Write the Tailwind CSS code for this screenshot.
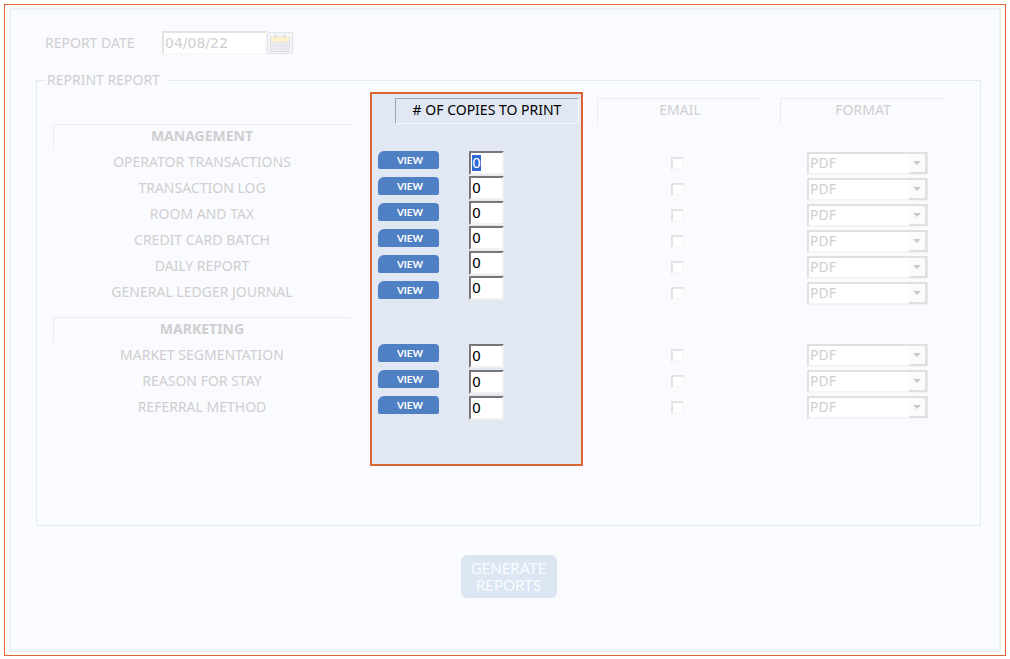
<!DOCTYPE html>
<html lang="en">
<head>
  <meta charset="UTF-8" />
  <meta name="viewport" content="width=device-width, initial-scale=1.0" />
  <title>Reprint Report</title>
  <script src="https://cdn.jsdelivr.net/npm/@tailwindcss/browser@4"></script>
</head>
<body class="min-h-screen flex flex-col bg-white px-1 pt-1 pb-[3px] font-['Noto_Sans',sans-serif] text-sm leading-4 text-[#cfcfd0]">
  <main class="grow flex flex-col border border-[#dc6433] px-1 py-[3px]">
    <form class="grow border-2 border-[#ebf0f8] bg-[#fafbfe] pl-[25px] pr-[18px] pt-[21px]">
      <div class="flex items-center pl-[9px]">
        <label for="reportDate" class="w-[117px]">REPORT DATE</label>
        <input id="reportDate" type="text" value="04/08/22" class="h-6 w-[105px] border-2 border-t-[#e2e2e2] border-l-[#e2e2e2] border-r-[#f8f8f9] border-b-[#f8f8f9] bg-white pl-px font-['DejaVu_Sans',sans-serif] outline-none" />
        <button type="button" aria-label="Pick date" class="flex h-[22px] w-[26px] items-center justify-center rounded-xs border border-[#dfe1e8] bg-[#f5f6f8]">
          <svg width="20" height="18" viewBox="0 0 20 18" fill="none">
            <rect x="0.5" y="2.5" width="19" height="15" rx="1.5" fill="#eceef1" stroke="#dcdee3" />
            <path d="M1 2.5h18v5.5H1z" fill="#fbf1cf" />
            <path d="M5.5 0v4M14.5 0v4" stroke="#d9dbe0" stroke-width="1.5" />
            <path d="M2 8.5h16M2 11.5h16M2 14.5h16M4.5 9v7M7.5 9v7M10.5 9v7M13.5 9v7M16.5 9v7" stroke="#e2e4e8" />
          </svg>
        </button>
      </div>

      <fieldset class="mt-[17px] border border-[#e3eaf6] pt-1 pb-[59px]">
        <legend class="ml-2 pr-2 pl-[2px]">REPRINT REPORT</legend>
        <div class="grid grid-cols-[333fr_213fr_189fr_208fr]">
          <!-- report names -->
          <div class="pt-8 pl-4 pr-[19px] text-center">
            <h2 class="h-[25px] border border-t-[#ececed] border-l-[#ececed] border-r-[#fefefe] border-b-[#fefefe] pt-[3px] font-bold">MANAGEMENT</h2>
            <div data-list="name" data-group="management"></div>
            <h2 class="mt-3 h-[25px] border border-t-[#ececed] border-l-[#ececed] border-r-[#fefefe] border-b-[#fefefe] pt-[3px] font-bold">MARKETING</h2>
            <div data-list="name" data-group="marketing"></div>
          </div>

          <!-- copies, highlighted -->
          <div class="h-[374px] border-2 border-[#dc6433] bg-[#e2e8f3] pt-1 pl-[6px] pr-[2px] text-black">
            <h2 class="ml-[17px] h-[26px] border border-t-[#a3a7ae] border-l-[#a3a7ae] border-r-[#f5f7fb] border-b-[#f5f7fb] pt-[3px] text-center">
              # OF COPIES TO PRINT
            </h2>
            <div class="mt-[27px] flex gap-[30px]">
              <div data-list="view" data-group="management" class="flex flex-col gap-2"></div>
              <div data-list="copies" data-group="management" class="flex flex-col gap-px"></div>
            </div>
            <div class="mt-11 flex gap-[30px]">
              <div data-list="view" data-group="marketing" class="flex flex-col gap-2"></div>
              <div data-list="copies" data-group="marketing" class="flex flex-col gap-[2px]"></div>
            </div>
          </div>

          <div class="pt-[6px] pl-[14px] pr-[9px]">
            <h2 class="h-[26px] border border-t-[#ececed] border-l-[#ececed] border-r-[#fefefe] border-b-[#fefefe] pt-[3px] text-center">EMAIL</h2>
            <div data-list="email" data-group="management" class="mt-[26px] pr-[6px]"></div>
            <div data-list="email" data-group="marketing" class="mt-9 pr-[6px]"></div>
          </div>

          <div class="pt-[6px] pl-2 pr-[34px]">
            <h2 class="h-[26px] border border-t-[#ececed] border-l-[#ececed] border-r-[#fefefe] border-b-[#fefefe] pt-[3px] text-center">FORMAT</h2>
            <div data-list="format" data-group="management" class="mt-[26px] pl-[27px]"></div>
            <div data-list="format" data-group="marketing" class="mt-9 pl-[27px]"></div>
          </div>
        </div>
      </fieldset>

      <button type="button" class="mt-[29px] mx-auto block h-[43px] w-24 rounded-md bg-[#dce6f2] font-['Lato',sans-serif] text-[15px] leading-[17px] text-[#fafbfe]">GENERATE REPORTS</button>
    </form>
  </main>

  <script>
    const reports = {
      management: ["OPERATOR TRANSACTIONS", "TRANSACTION LOG", "ROOM AND TAX", "CREDIT CARD BATCH", "DAILY REPORT", "GENERAL LEDGER JOURNAL"],
      marketing: ["MARKET SEGMENTATION", "REASON FOR STAY", "REFERRAL METHOD"],
    };

    const templates = {
      name: (name, id) => `
        <label for="copies-${id}" class="block h-[26px] leading-[26px]">${name}</label>`,
      view: name => `
        <button type="button" aria-label="View ${name}" class="h-[18px] w-[61px] rounded-tl-md rounded-tr-[4px] rounded-b-xs bg-[#5080c4] pl-[3px] font-['Lato',sans-serif] text-[10px] leading-[18px] font-bold text-white">VIEW</button>`,
      copies: (name, id) => `
        <input id="copies-${id}" type="text" value="0" class="h-6 w-[35px] border-2 border-t-[#777777] border-l-[#777777] border-r-[#f1f1f1] border-b-[#f1f1f1] bg-white pb-px pl-px font-['DejaVu_Sans',sans-serif] text-black outline-none selection:bg-[#2f6bd6] selection:text-white" />`,
      email: name => `
        <div class="flex h-[26px] items-center justify-center">
          <input type="checkbox" aria-label="Email ${name}" class="size-[13px] appearance-none border-2 border-t-[#e3e3e3] border-l-[#e3e3e3] border-r-[#f8f8f8] border-b-[#f8f8f8] bg-white" />
        </div>`,
      format: name => `
        <div class="flex h-[26px] items-center">
          <div class="relative w-[121px]">
            <select aria-label="Format of ${name}" class="block h-[23px] w-full appearance-none border-2 border-t-[#e0e0e0] border-l-[#e0e0e0] border-r-[#e8e8e8] border-b-[#f4f4f4] bg-white pl-px outline-none"><option>PDF</option></select>
            <span class="pointer-events-none absolute top-[2px] right-px flex h-5 w-[18px] items-center justify-center border-r-2 border-b-2 border-[#e0e0e0] bg-[#fbfbfc]">
              <svg width="8" height="4" viewBox="0 0 8 4"><path d="M0 0h8L4 4z" fill="#c9c9c9" /></svg>
            </span>
          </div>
        </div>`,
    };

    document.querySelectorAll("[data-list]").forEach(el => {
      const { list, group } = el.dataset;
      el.innerHTML = reports[group].map((name, i) => templates[list](name, `${group}-${i}`)).join("");
    });

    const first = document.getElementById("copies-management-0");
    first.focus();
    first.select();
  </script>
</body>
</html>
